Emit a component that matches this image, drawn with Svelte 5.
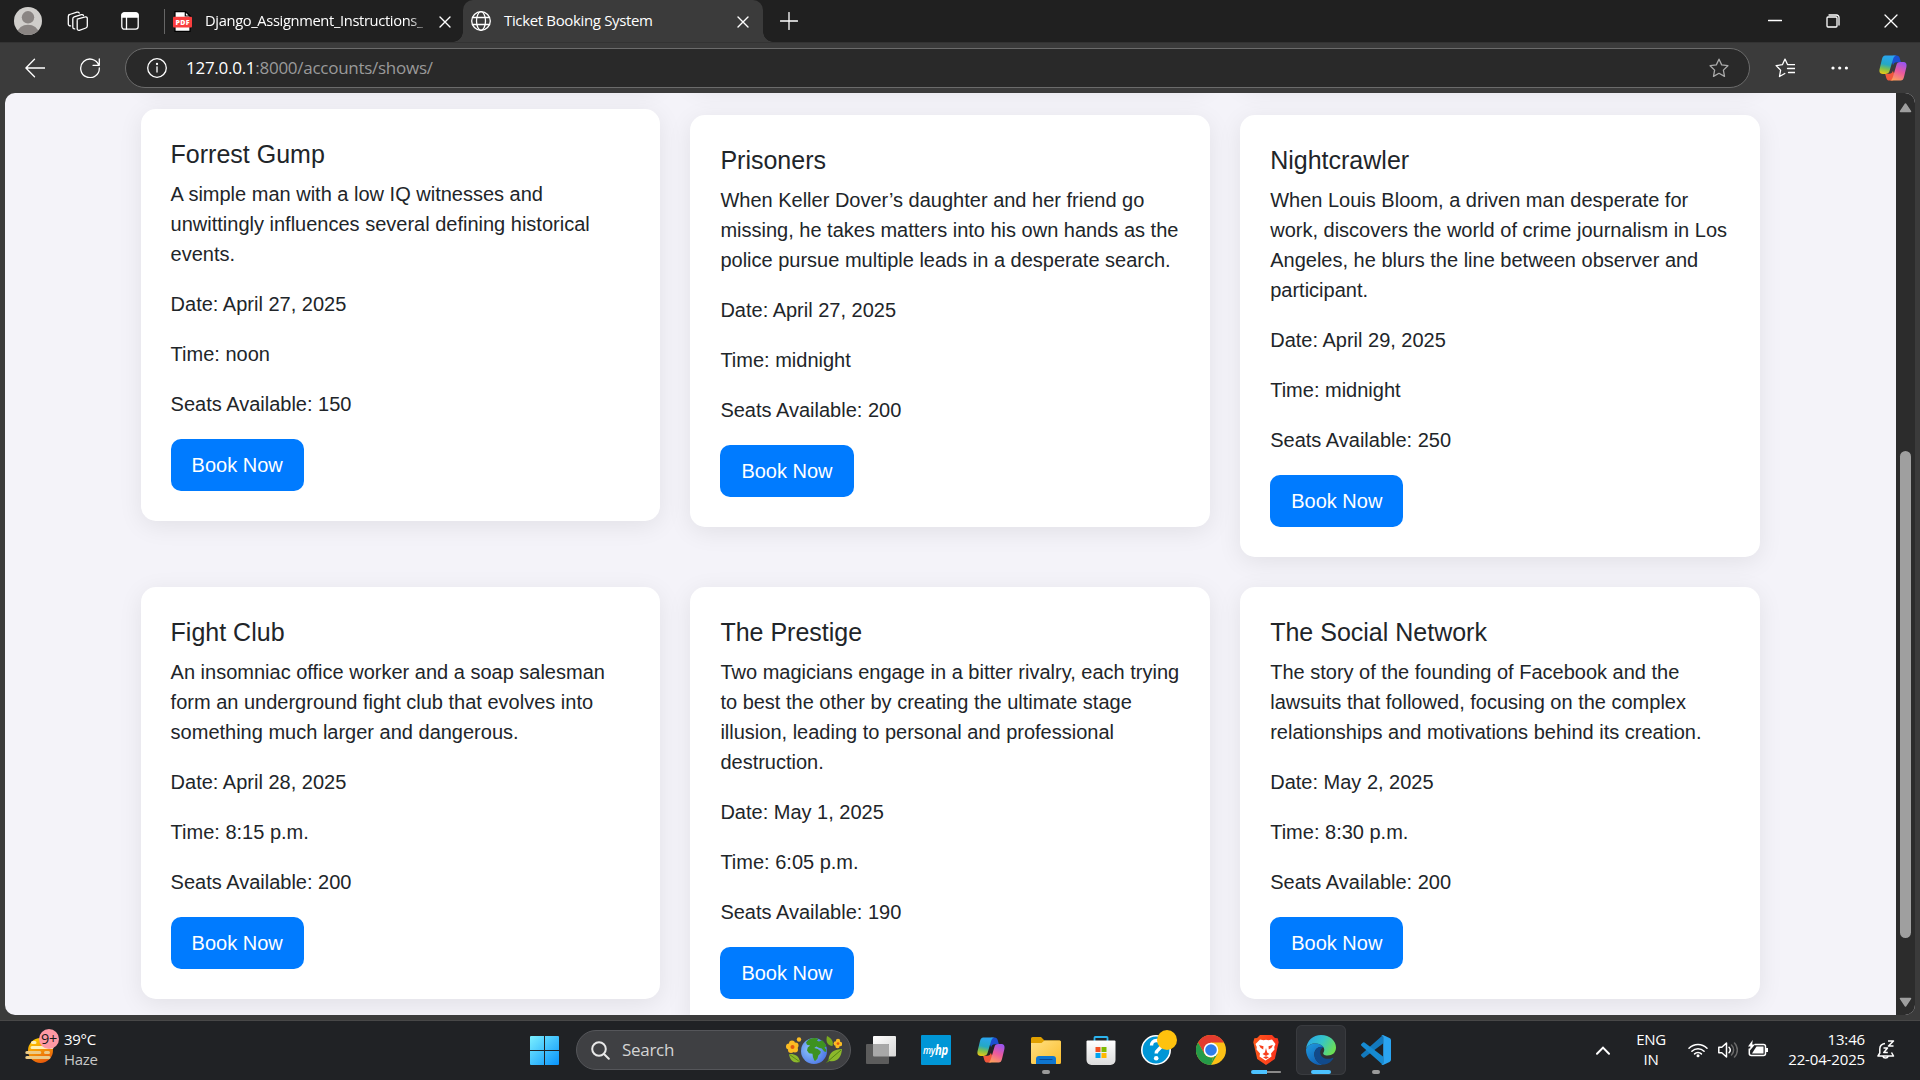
<script>
  const rows = [
    [
      {
        title: 'Forrest Gump',
        text: 'A simple man with a low IQ witnesses and unwittingly influences several defining historical events.',
        date: 'April 27, 2025', time: 'noon', seats: 150, raised: true
      },
      {
        title: 'Prisoners',
        text: 'When Keller Dover’s daughter and her friend go missing, he takes matters into his own hands as the police pursue multiple leads in a desperate search.',
        date: 'April 27, 2025', time: 'midnight', seats: 200
      },
      {
        title: 'Nightcrawler',
        text: 'When Louis Bloom, a driven man desperate for work, discovers the world of crime journalism in Los Angeles, he blurs the line between observer and participant.',
        date: 'April 29, 2025', time: 'midnight', seats: 250
      }
    ],
    [
      {
        title: 'Fight Club',
        text: 'An insomniac office worker and a soap salesman form an underground fight club that evolves into something much larger and dangerous.',
        date: 'April 28, 2025', time: '8:15 p.m.', seats: 200
      },
      {
        title: 'The Prestige',
        text: 'Two magicians engage in a bitter rivalry, each trying to best the other by creating the ultimate stage illusion, leading to personal and professional destruction.',
        date: 'May 1, 2025', time: '6:05 p.m.', seats: 190
      },
      {
        title: 'The Social Network',
        text: 'The story of the founding of Facebook and the lawsuits that followed, focusing on the complex relationships and motivations behind its creation.',
        date: 'May 2, 2025', time: '8:30 p.m.', seats: 200
      }
    ]
  ];
</script>

{#snippet copilot(id)}
  <svg class="copilot" viewBox="0 0 28 26">
    <defs>
      <linearGradient id="{id}a" x1="0.3" y1="0" x2="0.1" y2="1">
        <stop offset="0" stop-color="#2aa5ee" /><stop offset=".45" stop-color="#25a8c4" />
        <stop offset=".7" stop-color="#7fc04c" /><stop offset="1" stop-color="#f5c810" />
      </linearGradient>
      <linearGradient id="{id}b" x1="0.7" y1="0" x2="0.3" y2="1">
        <stop offset="0" stop-color="#9a55ee" /><stop offset=".5" stop-color="#ec5a9c" />
        <stop offset="1" stop-color="#fda05c" />
      </linearGradient>
    </defs>
    <path d="M14 0.400h3.600c1.700 0 2.600 1 3.100 2.600l1.200 4.200h-4.200c-2 0-3 1-3.600 3L12 5z" fill="#1b4fd0" />
    <path d="M14 25.600h-3.600c-1.700 0-2.600-1-3.100-2.600l-1.200-4.200h4.200c2 0 3-1 3.600-3L16 21z" fill="#f0573c" />
    <path d="M6.300 0.400h11c-1.800.3-2.600 1.600-3.200 3.600l-3.400 11.600c-.6 2.200-1.800 3.300-4 3.300H3.800C.8 18.900 0 16.600.6 14L3 4C3.600 1.700 4.500.4 6.300.4z" fill="url(#{id}a)" />
    <path d="M21.700 25.600h-11c1.800-.3 2.600-1.600 3.200-3.600l3.400-11.600c.6-2.200 1.800-3.300 4-3.300h2.900c3 0 3.800 2.300 3.200 4.900L25 22c-.6 2.300-1.500 3.600-3.300 3.600z" fill="url(#{id}b)" />
  </svg>
{/snippet}

{#snippet cross(cls)}
  <svg class={cls} viewBox="0 0 12 12"><path d="M1 1l10 10M11 1L1 11" /></svg>
{/snippet}

<div class="screen">
  <header class="tabs">
    <svg class="avatar" viewBox="0 0 28 28">
      <defs><clipPath id="av"><circle cx="14" cy="14" r="14" /></clipPath></defs>
      <g clip-path="url(#av)">
        <rect width="28" height="28" fill="#d0cecb" />
        <circle cx="14" cy="10.300" r="6.200" fill="#8a8583" />
        <ellipse cx="14" cy="25.500" rx="10.300" ry="7.800" fill="#8a8583" />
      </g>
    </svg>
    <svg class="spaces line" viewBox="0 0 22 22">
      <path d="M10.200 9.200l8-2.300a1.600 1.600 0 0 1 2.100 1.500v7.700a2 2 0 0 1-1.400 1.900l-6.600 2.300a1.600 1.600 0 0 1-2.100-1.500V10.500" />
      <path d="M7.700 18.900c-1 0-1.900-.5-1.900-1.700V8.800c0-1 .6-1.600 1.400-1.900l7.200-2.200c1-.3 1.800.1 2.100.9" />
      <path d="M3.600 15.900c-1.400 0-2.300-.6-2.300-1.900V6.400c0-1 .6-1.700 1.400-1.900l7.200-2.300c1.100-.3 2 .1 2.300.9" />
    </svg>
    <svg class="tabmenu line" viewBox="0 0 18 18">
      <rect x=".8" y=".8" width="16.400" height="16.400" rx="2.600" />
      <path d="M5.500 5v12" /><path d="M1 3.400A2.600 2.600 0 0 1 3.400.8h11.200A2.600 2.600 0 0 1 17 3.400V5H1z" fill="#fff" />
    </svg>
    <i class="divider"></i>
    <div class="tab first">
      <svg class="pdf" viewBox="0 0 19 21">
        <path d="M2 .6h10.500L17 5v15.400H2z" fill="#fff" stroke="#000" stroke-width="1.200" />
        <path d="M12.300.6V5H17z" fill="#fff" stroke="#000" stroke-width="1.200" />
        <rect y="5.800" width="19" height="10.700" rx="1" fill="#fa3e3e" />
        <text x="9.500" y="13.900" text-anchor="middle" textLength="14">PDF</text>
      </svg>
      <span class="name fade">Django_Assignment_Instructions_</span>
      {@render cross('x')}
    </div>
    <div class="tab active">
      <svg class="globe line" viewBox="0 0 20 20">
        <circle cx="10" cy="10" r="9.300" /><ellipse cx="10" cy="10" rx="4.500" ry="9.300" />
        <path d="M1.500 6.500h17M1.500 13.500h17" />
      </svg>
      <span class="name">Ticket Booking System</span>
      {@render cross('x')}
    </div>
    <svg class="plus line" viewBox="0 0 18 18"><path d="M9 .5v17M.5 9h17" /></svg>
    <div class="window">
      <svg class="line" viewBox="0 0 14 14"><path d="M.5 6.500h13" /></svg>
      <svg class="line" viewBox="0 0 14 14"><rect x="1" y="3" width="10" height="10" rx="1" /><path d="M3 1h7.500A2.500 2.500 0 0 1 13 3.500V11" /></svg>
      <svg class="line" viewBox="0 0 14 14"><path d="M1 1l12 12M13 1L1 13" /></svg>
    </div>
  </header>

  <nav class="toolbar">
    <svg class="back line" viewBox="0 0 20 20"><path d="M20 10H1M9.500 1.300L.9 10l8.600 8.700" /></svg>
    <svg class="reload line" viewBox="0 0 20 20"><path d="M18.800 7.300a9.300 9.300 0 1 0 .5 2.700M19.300 1v6.300H13" /></svg>
    <div class="address">
      <svg class="info line" viewBox="0 0 20 20"><circle cx="10" cy="10" r="9.300" /><path d="M10 8.800V14" /><circle cx="10" cy="6" r=".5" fill="#fff" /></svg>
      <span class="url"><b>127.0.0.1</b>:8000/accounts/shows/</span>
      <svg class="star" viewBox="0 0 20 20"><path d="M10 1.200l2.700 5.700 6.200.8-4.500 4.400 1.100 6.300L10 15.300l-5.500 3.100 1.100-6.300L1.100 7.700l6.200-.8z" /></svg>
    </div>
    <svg class="favs line" viewBox="0 0 20 20"><path d="M13.800 6.700l-1.300-.1L10 1.100 7.400 6.700l-6.300.9 4.500 4.500-1.100 6.400 5.300-3M13 6.700h7M12.500 10.500H20M13.500 14.500H20" /></svg>
    <svg class="dots" viewBox="0 0 18 4"><circle cx="2" cy="2" r="1.600" /><circle cx="8.700" cy="2" r="1.600" /><circle cx="15.400" cy="2" r="1.600" /></svg>
    {@render copilot('top')}
  </nav>

  <main class="viewport">
    <div class="page">
      <div class="row above"><i class="card"></i><i class="card"></i><i class="card"></i></div>
      {#each rows as row}
        <div class="row">
          {#each row as show}
            <article class="card" class:raised={show.raised}>
              <h5>{show.title}</h5>
              <p>{show.text}</p>
              <p>Date: {show.date}</p>
              <p>Time: {show.time}</p>
              <p>Seats Available: {show.seats}</p>
              <button>Book Now</button>
            </article>
          {/each}
        </div>
      {/each}
    </div>
    <div class="scrollbar">
      <svg viewBox="0 0 13 10"><path d="M6.500 1l5 7.500h-10z" /></svg>
      <i class="thumb"></i>
      <svg viewBox="0 0 13 10"><path d="M6.500 9l5-7.500h-10z" /></svg>
    </div>
  </main>

  <footer class="taskbar">
    <div class="weather">
      <svg viewBox="0 0 36 36">
        <defs><linearGradient id="sun" x1=".2" y1="0" x2=".6" y2="1"><stop offset="0" stop-color="#ffd200" /><stop offset="1" stop-color="#e8590c" /></linearGradient></defs>
        <circle cx="15.500" cy="21.500" r="12.500" fill="url(#sun)" />
        <g stroke-width="3" stroke-linecap="round">
          <path d="M7.500 13.500h2.500M7 18.500h20" stroke="#fff0b8" />
          <path d="M1.800 23.500h13M20.500 23.500h3M1.800 28.500H24" stroke="#ecca86" />
        </g>
        <circle cx="24" cy="10" r="10" fill="#ff99a4" />
        <text x="24" y="15.300" text-anchor="middle" textLength="16">9+</text>
      </svg>
      <div><span>39°C</span><span class="dim">Haze</span></div>
    </div>

    <div class="apps">
      <svg class="start" viewBox="0 0 29 29">
        <defs><linearGradient id="win" x1="0" y1="0" x2="1" y2="1"><stop offset="0" stop-color="#7bf0ff" /><stop offset="1" stop-color="#0893fb" /></linearGradient></defs>
        <path d="M1 0h13v14H0V1a1 1 0 0 1 1-1zM15 0h13a1 1 0 0 1 1 1v13H15zM0 15h14v14H1a1 1 0 0 1-1-1zM15 15h14v13a1 1 0 0 1-1 1H15z" fill="url(#win)" />
      </svg>
      <div class="search">
        <svg class="lens" viewBox="0 0 19 19"><circle cx="8" cy="8" r="6.800" /><path d="M13 13l4.800 4.800" /></svg>
        <span>Search</span>
        <svg class="earth" viewBox="0 0 56 28">
          <defs><radialGradient id="sea" cx=".35" cy=".45" r=".7"><stop offset="0" stop-color="#8cc4fa" /><stop offset="1" stop-color="#4a72e4" /></radialGradient></defs>
          <g fill="#fbbc24"><circle cx="6" cy="7.500" r="3" /><circle cx="3" cy="10.500" r="3" /><circle cx="9.500" cy="9.500" r="3" /><circle cx="5" cy="14" r="3" /><circle cx="9" cy="13.500" r="3" /><circle cx="13" cy="3.500" r="2.200" />
            <circle cx="52" cy="5" r="2.200" /><circle cx="49.800" cy="7.500" r="2.200" /><circle cx="54" cy="8" r="2.200" /><circle cx="51.500" cy="10" r="2.200" /></g>
          <circle cx="6.500" cy="11" r="2" fill="#e05a10" /><circle cx="52" cy="7.600" r="1.400" fill="#e05a10" />
          <path d="M3 18c5-.5 10 1 11 8-6 1.500-10-1-11-8z" fill="#8cb82b" /><path d="M3.500 18.500L14 26" stroke="#4d7d12" stroke-width=".8" />
          <path d="M41 0c4 2 7 5 5.500 10-5-.5-7-4-5.500-10z" fill="#7aaa1f" />
          <path d="M56 13c-7 .3-13 3-13.500 11l-2 2.500 3-1.500c8 1.500 12-4 12.500-12z" fill="#8cb82b" /><path d="M55 14L40.500 26.500" stroke="#4d7d12" stroke-width=".9" />
          <circle cx="28" cy="15" r="13" fill="url(#sea)" />
          <path d="M20 6.500C22 3.500 25.500 2 29 2.100l3.500.6-1.500 2 2 .8 3-1.300c2 1.600 3.500 3.600 4.300 6l-1.800 1.600 1.800 1.700v2.500l-2-.5-2.500-3-3-.8-2.500-1.200-2 1.500 3.500 1 3 2.500-.5 2-2 2-.8 3-2 2.300h-1l-1.500-3.500-.5-3.500-3.500-.5-2-2.700.7-3 2.500-2-3.200-.8z" fill="#3d9220" />
        </svg>
      </div>
      <div class="app"><svg viewBox="0 0 30 30">
        <defs><linearGradient id="tv" x1="0" y1="0" x2="1" y2="1"><stop offset="0" stop-color="#fff" /><stop offset="1" stop-color="#d6d6d6" /></linearGradient></defs>
        <rect x="7" y="1" width="23" height="20.500" rx="1" fill="url(#tv)" />
        <rect x="0" y="9" width="23" height="20" rx="1" fill="#5c5c5c" /><path d="M7 9h15a1 1 0 0 1 1 1v11.500H8a1 1 0 0 1-1-1z" fill="#a8a8a8" />
      </svg></div>
      <div class="app"><svg viewBox="0 0 30 30"><rect width="30" height="30" rx="1" fill="#0096d6" /><text class="my" x="2" y="18.500" textLength="12" lengthAdjust="spacingAndGlyphs">my</text><text class="hp" x="14" y="20" textLength="13" lengthAdjust="spacingAndGlyphs">hp</text></svg></div>
      <div class="app">{@render copilot('task')}</div>
      <div class="app"><svg viewBox="0 0 30 30">
        <defs><linearGradient id="fold" x1="0" y1="0" x2="1" y2="1"><stop offset="0" stop-color="#ffe083" /><stop offset="1" stop-color="#fbbd2c" /></linearGradient></defs>
        <path d="M0 3.500a1.500 1.500 0 0 1 1.500-1.500H10l3.500 3.500H28.500A1.500 1.500 0 0 1 30 7v10H0z" fill="#e0a000" />
        <path d="M0 8h10.500l3-2.500H28.500A1.500 1.500 0 0 1 30 7v20.500A1.500 1.500 0 0 1 28.500 29h-27A1.500 1.500 0 0 1 0 27.500z" fill="url(#fold)" />
        <path d="M5 29v-5a3 3 0 0 1 3-3h14a3 3 0 0 1 3 3v5z" fill="#0f76d0" /><path d="M9 24.500h12" stroke="#0a4a96" stroke-width="1.200" stroke-linecap="round" />
      </svg><i class="mark"></i></div>
      <div class="app"><svg viewBox="0 0 30 30">
        <defs><linearGradient id="bag" x1="0" y1="0" x2="0" y2="1"><stop offset="0" stop-color="#fff" /><stop offset="1" stop-color="#dcdcdc" /></linearGradient></defs>
        <path d="M8.500 6V2.700A.7.7 0 0 1 9.200 2h11.600a.7.7 0 0 1 .7.700V6" fill="none" stroke="#2cb4ee" stroke-width="1.800" />
        <path d="M.5 6.500a1.500 1.500 0 0 1 1-1H28.500a1 1 0 0 1 1 1V25a5 5 0 0 1-5 5h-19a5 5 0 0 1-5-5z" fill="url(#bag)" />
        <path d="M9.500 12h5v5h-5z" fill="#f25022" /><path d="M15.500 12h5v5h-5z" fill="#7fba00" /><path d="M9.500 18h5v5h-5z" fill="#00a4ef" /><path d="M15.500 18h5v5h-5z" fill="#ffb900" />
      </svg></div>
      <div class="app"><svg class="help" viewBox="0 0 38 38">
        <circle cx="17" cy="20" r="14.200" fill="#0096d6" stroke="#fff" stroke-width="1.600" />
        <path d="M12.500 15.500c0-3 2-5 5-5s5 2 5 4.500c0 4.200-5.300 4-5.300 8.500" fill="none" stroke="#fff" stroke-width="3.400" /><circle cx="17.200" cy="28.200" r="2.300" fill="#fff" />
        <circle cx="28" cy="10" r="10" fill="#ffc20e" />
      </svg></div>
      <div class="app"><svg viewBox="0 0 30 30">
        <circle cx="15" cy="15" r="15" fill="#fbc116" />
        <path d="M2 7.500A15 15 0 0 1 28 7.500H15L8.500 18.700z" fill="#e33b2e" />
        <path d="M2 7.500L8.500 18.700Q11 22.500 15 22.500h2L15 30A15 15 0 0 1 2 7.500z" fill="#259b48" /><path d="M21.500 18.800L15 30h-.5l4-10z" fill="#259b48" />
        <circle cx="15" cy="15" r="7.300" fill="#fff" /><circle cx="15" cy="15" r="5.800" fill="#2f7de9" />
      </svg></div>
      <div class="app"><svg viewBox="0 0 30 30">
        <defs><linearGradient id="lion" x1="0" y1="0" x2="1" y2="0"><stop offset="0" stop-color="#ff5a1c" /><stop offset="1" stop-color="#f8301c" /></linearGradient></defs>
        <path d="M9 0h12l3 3 2.700.3 1 4L27 10l-3.200 14L15 30 6.200 24 3 10l-.7-2.700 1-4L6 3z" fill="url(#lion)" />
        <path d="M9 4.500l3.500.7 2.500-.5 2.500.5 3.500-.7 3.500 4.500-1.300 3 .3 2.500-3.500 4 .5 3-6 4-6-4 .5-3-3.500-4 .3-2.500-1.300-3z" fill="#fff" />
        <path d="M8 10l4.500 1.200-.3 3.300-2.700-1.800zM22 10l-4.500 1.200.3 3.300 2.700-1.800zM15 13l1.200 4.500 2.300 1.600L15 21l-3.500-1.900 2.300-1.600zM12 22.300l3-1 3 1-3 1.700z" fill="#f8401c" />
      </svg><i class="mark pair"></i></div>
      <div class="app current"><svg viewBox="0 0 30 30">
        <defs>
          <linearGradient id="e1" x1="0" y1=".2" x2="1" y2=".6"><stop offset="0" stop-color="#28a5e8" /><stop offset=".5" stop-color="#35c4c8" /><stop offset="1" stop-color="#6de052" /></linearGradient>
          <linearGradient id="e2" x1="0" y1="0" x2=".6" y2="1"><stop offset="0" stop-color="#1f9be0" /><stop offset="1" stop-color="#1160b4" /></linearGradient>
        </defs>
        <path d="M0 14C1 5.500 7 0 15 0c9 0 15 6 15 12.500 0 5-3.500 8-8.500 8-3.500 0-5-1.500-4-3C20 14 16.500 8.500 9.500 8.500 5 8.500 1.500 10.500 0 14z" fill="url(#e1)" />
        <path d="M0 14.500C1.500 10.500 5 8.500 9.500 8.500c4 0 7 1.700 8.300 4C12 10.500 7.500 15 8.500 21c.7 4 4 7.500 8.500 8.800C7 31 0 24 0 14.500z" fill="url(#e2)" />
        <path d="M17.500 12.200C12 10.500 7.500 15 8.500 21c.8 4.800 5 8.900 10 8.600 4-.6 7-3 8.800-6 .3-.6-.2-1-.8-.7-6 2.600-12.500-.4-12.300-6 .1-2 1.300-3.700 3.300-4.700z" fill="#114a8b" />
      </svg><i class="mark wide"></i></div>
      <div class="app"><svg viewBox="0 0 30 30">
        <path d="M22 0v8.500L3.500 22.500a1.200 1.200 0 0 1-1.500 0L.4 21a1.200 1.200 0 0 1 0-1.700z" fill="#1379bd" />
        <path d="M22 30v-8.500L3.500 7.500a1.200 1.200 0 0 0-1.500 0L.4 9a1.200 1.200 0 0 0 0 1.700z" fill="#168bd2" />
        <path d="M22 0l6.500 3A2.500 2.500 0 0 1 30 5.200v19.600a2.500 2.500 0 0 1-1.500 2.200L22 30c-.8 0-1.500-.4-2-1 1 .8 2.200.2 2.200-1V2c0-1.200-1.200-1.800-2.200-1 .5-.6 1.200-1 2-1z" fill="#2aa4f1" />
      </svg><i class="mark"></i></div>
    </div>

    <div class="tray">
      <svg class="chev" viewBox="0 0 14 9"><path d="M1 7.800L7 1.600l6 6.200" /></svg>
      <div class="lang"><span>ENG</span><span>IN</span></div>
      <div class="status">
        <svg viewBox="0 0 20 20"><path d="M1 8.300a12.700 12.700 0 0 1 18 0M3.900 11.200a8.600 8.600 0 0 1 12.200 0M6.600 13.900a4.800 4.800 0 0 1 6.800 0" /><circle cx="10" cy="15.800" r="1.500" fill="#fff" stroke="none" /></svg>
        <svg viewBox="0 0 20 20"><path d="M.8 7.300h3L8.500 3v14L3.800 12.800h-3z" /><path d="M11 7.300a4 4 0 0 1 0 5.500" /><path d="M13.500 5a7 7 0 0 1 0 10M16.500 3a10 10 0 0 1 0 14" stroke="#6a6a6a" /></svg>
        <svg viewBox="0 0 20 20"><path d="M7 4.500h8.500a2 2 0 0 1 2 2v7a2 2 0 0 1-2 2H3.300a2 2 0 0 1-2-2V9" /><path d="M18 8h2v4h-2z" fill="#fff" stroke="none" /><path d="M8.500 6.500h7v7H4l2.500-4z" fill="#fff" stroke="none" /><path d="M4.700 0L0 6.500h2.500L1.500 11 7 4.500H4.200z" fill="#fff" stroke="none" /></svg>
      </div>
      <div class="clock"><span>13:46</span><span>22-04-2025</span></div>
      <svg class="bell" viewBox="0 0 18 19"><path d="M8 3.500C4.500 4 2.800 6.500 2.800 9v4L1 16h15.500l-2-3.500M6 16.500c.5 2 4.500 2 5 0M11 1h5.500L11.500 6h5M6.500 8h4L6.800 12.500h4" /></svg>
    </div>
  </footer>
</div>

<style>
  :global(body) { margin: 0; overflow: hidden; background: #202020; }
  * { box-sizing: border-box; }
  svg { display: block; flex: none; }
  .screen { width: 1920px; height: 1080px; display: flex; flex-direction: column; overflow: hidden; background: #3b3b3b; font-family: 'Open Sans', sans-serif; color: #fff; }
  .line { fill: none; stroke: #fff; stroke-width: 1.300; stroke-linecap: round; stroke-linejoin: round; }

  .tabs { height: 42px; flex: none; display: flex; align-items: center; padding-left: 14px; background: #202020; }
  .avatar { width: 28px; height: 28px; }
  .spaces { width: 22px; height: 22px; margin-left: 25px; }
  .tabmenu { width: 18px; height: 18px; margin-left: 32px; }
  .divider { width: 1px; height: 25px; margin-left: 25px; background: #666; }
  .tab { height: 42px; display: flex; align-items: center; font-size: 15px; }
  .tab.first { width: 298px; padding: 0 12px 0 8px; }
  .tab.active { width: 300px; padding: 0 14px 0 8px; background: #3b3b3b; border-radius: 10px 10px 0 0; position: relative; }
  .tab.active::before, .tab.active::after { content: ''; position: absolute; bottom: 0; width: 10px; height: 10px; }
  .tab.active::before { left: -10px; background: radial-gradient(circle at 0 0, #202020 9.500px, #3b3b3b 10px); }
  .tab.active::after { right: -10px; background: radial-gradient(circle at 100% 0, #202020 9.500px, #3b3b3b 10px); }
  .pdf { width: 19px; height: 21px; }
  .pdf text { font: 800 7px 'Open Sans', sans-serif; fill: #fff; }
  .globe { width: 20px; height: 20px; }
  .name { margin: 0 auto 2px 13px; white-space: nowrap; letter-spacing: -0.350px; line-height: 20px; }
  .fade { font-size: 14.700px; letter-spacing: -0.350px; mask-image: linear-gradient(90deg, #000 93%, rgba(0, 0, 0, 0.35) 100%); }
  .x { width: 12px; height: 12px; margin-top: 2px; fill: none; stroke: #fff; stroke-width: 1.400; stroke-linecap: round; }
  .plus { width: 18px; height: 18px; margin-left: 17px; }
  .window { margin-left: auto; padding-right: 22px; display: flex; gap: 44px; }
  .window svg { width: 14px; height: 14px; }

  .toolbar { height: 51px; flex: none; display: flex; align-items: center; padding-left: 25px; border-top: 1px solid #333; }
  .back { width: 20px; height: 20px; }
  .reload { width: 20px; height: 20px; margin-left: 35px; }
  .address { width: 1625px; height: 40px; margin-left: 25px; display: flex; align-items: center; padding: 0 20px 0 21px; border: 1px solid #6b6b6b; border-radius: 20px; background: #292929; }
  .info { width: 20px; height: 20px; }
  .url { margin: 0 0 1px 19px; font-size: 17px; letter-spacing: -0.270px; color: #9a9a9a; line-height: 24px; }
  .url b { font-weight: 400; color: #fff; }
  .star { width: 20px; height: 20px; margin-left: auto; fill: none; stroke: #aaa; stroke-width: 1.300; stroke-linejoin: round; }
  .favs { width: 20px; height: 20px; margin-left: 25px; }
  .dots { width: 18px; height: 4px; margin-left: 36px; fill: #fff; }
  .toolbar .copilot { margin-left: 30px; }
  .copilot { width: 28px; height: 26px; }

  .viewport { height: 922px; flex: none; margin: 0 5px; display: flex; border-radius: 10px; overflow: hidden; background: #f4f3f9; }
  .page { width: 1891px; height: 922px; overflow: hidden; padding-left: 135.600px; font-family: 'Liberation Sans', Arial, sans-serif; color: #212529; }
  .row { display: grid; grid-template-columns: repeat(3, 519.800px); gap: 30px; align-items: start; margin-bottom: 30px; }
  .row.above { margin-top: -308px; }
  .above .card { height: 300px; }
  .card { display: block; padding: 30px; border-radius: 15px; background: #fff; box-shadow: 0 5px 25px rgba(0, 0, 0, 0.08); }
  .raised { transform: translateY(-6px); }
  h5 { margin: 0 0 10px; font-size: 25px; line-height: 30px; font-weight: 400; }
  p { margin: 0 0 20px; font-size: 20px; line-height: 30px; }
  button { display: block; height: 52px; padding: 0 21px; border: 0; border-radius: 10px; background: #007bff; color: #fff; font: 20px/30px 'Liberation Sans', Arial, sans-serif; }
  .scrollbar { width: 19px; height: 922px; display: flex; flex-direction: column; align-items: center; padding: 10px 0 8px; background: #2c2c2c; }
  .scrollbar svg { width: 13px; height: 10px; fill: #9f9f9f; stroke: #9f9f9f; stroke-width: 1.500; stroke-linejoin: round; }
  .thumb { width: 11px; height: 487px; margin: 338px 0 auto; border-radius: 6px; background: #9f9f9f; }

  .taskbar { height: 60px; flex: none; margin-top: 5px; padding-bottom: 1px; display: flex; align-items: center; border-top: 1px solid #484848; background: #202225; font-size: 15px; line-height: 20px; letter-spacing: -0.300px; }
  .taskbar span { display: block; }
  .weather { width: 505px; padding-left: 25px; display: flex; align-items: center; }
  .weather svg { width: 36px; height: 36px; margin: -6px 3px 0 0; }
  .weather div, .lang, .clock { padding-bottom: 2px; }
  .weather text { font: 14.500px 'Open Sans', sans-serif; fill: #1a1a1a; }
  .dim { color: #c8c8c8; }
  .apps { display: flex; align-items: center; padding-left: 25px; }
  .start { width: 29px; height: 29px; }
  .search { width: 275px; height: 40px; margin: 0 2px 0 17px; padding: 0 8px 0 14px; display: flex; align-items: center; border: 1px solid #55565a; border-radius: 20px; background: #3f4043; font-size: 17px; color: #d4d4d4; }
  .lens { width: 19px; height: 19px; fill: none; stroke: #e8e8e8; stroke-width: 2; stroke-linecap: round; }
  .search span { margin: 0 0 1px 12px; }
  .earth { width: 56px; height: 28px; margin-left: auto; }
  .app { width: 50px; height: 50px; margin-right: 5px; display: flex; align-items: center; justify-content: center; position: relative; border-radius: 6px; }
  .search + .app { margin-left: 3px; }
  .app svg { width: 30px; height: 30px; }
  .app .copilot { width: 28px; height: 26px; }
  .app .help { width: 38px; height: 38px; margin: 0 0 2px 4px; }
  .current { background: #2e3034; box-shadow: inset 0 0 0 1px #393b3f; }
  .mark { position: absolute; bottom: 1px; left: 21px; width: 8px; height: 4px; border-radius: 2px; background: #9a9a9a; }
  .mark.wide { left: 15px; width: 20px; background: #4cc2ff; }
  .mark.pair { left: 10px; width: 30px; background: linear-gradient(90deg, #4cc2ff 16px, transparent 16px), linear-gradient(#0000 1px, #8a8a8a 1px 3px, #0000 3px); }
  .my, .hp { fill: #fff; font: italic 600 10px 'Open Sans', sans-serif; }
  .hp { font-size: 15px; font-weight: 700; }
  .tray { margin-left: auto; padding-right: 25px; display: flex; align-items: center; }
  .chev { width: 14px; height: 9px; fill: none; stroke: #fff; stroke-width: 2; stroke-linecap: round; }
  .lang { width: 60px; margin-left: 11px; text-align: center; }
  .status { display: flex; gap: 10px; margin-left: 7px; }
  .status svg { width: 20px; height: 20px; fill: none; stroke: #fff; stroke-width: 1.500; stroke-linecap: round; stroke-linejoin: round; }
  .clock { width: 97px; text-align: right; letter-spacing: -0.150px; }
  .bell { width: 18px; height: 19px; margin: 0 0 2px 12px; fill: none; stroke: #fff; stroke-width: 1.500; stroke-linejoin: round; }
</style>
